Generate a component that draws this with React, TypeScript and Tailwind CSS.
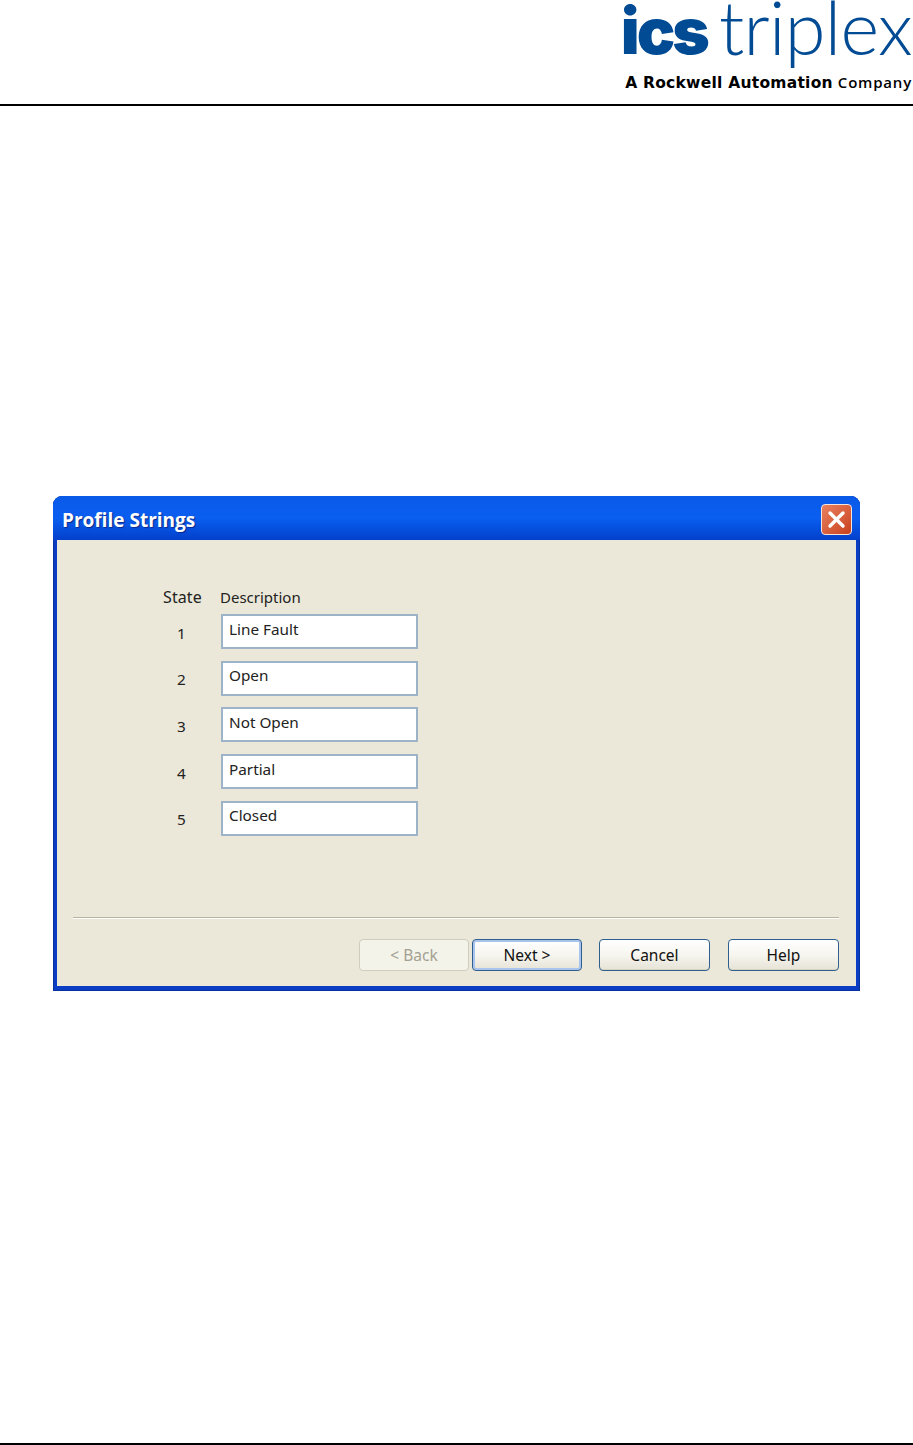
const rows = [
  { state: '1', text: 'Line Fault' },
  { state: '2', text: 'Open' },
  { state: '3', text: 'Not Open' },
  { state: '4', text: 'Partial' },
  { state: '5', text: 'Closed' },
];

const buttonBase =
  'h-[32px] rounded-[4px] border text-[15.5px] pt-[1px] flex items-center justify-center';

function ActionButton({ label, focused, wide }: { label: string; focused?: boolean; wide?: boolean }) {
  return (
    <div
      className={`${buttonBase} ${wide ? 'w-[111px]' : 'w-[110px]'} border-[#2f5f8f] bg-gradient-to-b from-white via-[#f6f5ef] to-[#e6e3d6] text-[#111] ${
        focused ? 'shadow-[inset_0_0_0_2px_#a9c4ec]' : 'shadow-[inset_0_-1px_0_#d8d4c2]'
      }`}
    >
      {label}
    </div>
  );
}

export default function App() {
  return (
    <div className="w-[913px] h-[1445px] bg-white flex flex-col font-['Noto_Sans',sans-serif] overflow-hidden">
      {/* Logo header */}
      <header className="h-[106px] shrink-0 border-b-2 border-black flex flex-col items-end pr-[1px]">
        <div className="h-[75px] flex items-start text-[#004b93]">
          <span className="font-['Inter',sans-serif] font-black text-[64px] leading-[62px] tracking-[-3px] mr-[12px]">ics</span>
          <span className="font-['Lato',sans-serif] font-light text-[74px] leading-[53px] tracking-[-0.7px]">triplex</span>
        </div>
        <div className="flex items-baseline gap-[5px] text-black leading-none font-['DejaVu_Sans',sans-serif]">
          <span className="font-bold text-[15.5px] tracking-[0.25px]">A Rockwell Automation</span>
          <span className="font-['Open_Sans',sans-serif] font-semibold text-[15px] tracking-[0.8px]">Company</span>
        </div>
      </header>

      {/* Dialog */}
      <div className="mt-[390px] ml-[53px] w-[807px] h-[495px] rounded-t-[9px] bg-[#0a3cc4] shadow-[inset_0_0_0_1px_#0831a0] flex flex-col">
        <div className="h-[44px] shrink-0 rounded-t-[9px] bg-gradient-to-b from-[#0a5ae8] via-[#0a5ef0] to-[#0440cc] flex items-center justify-between pl-[9px] pr-[8px]">
          <span className="font-['Open_Sans',sans-serif] font-bold text-[19px] pt-[4px] text-white [text-shadow:1px_1px_1px_#0b2a8c]">
            Profile Strings
          </span>
          <div className="w-[31px] h-[31px] mt-[2px] rounded-[4px] border border-[#f3e4de] bg-gradient-to-br from-[#e8805f] to-[#c9401a] flex items-center justify-center">
            <svg width="21" height="21" viewBox="0 0 21 21">
              <path d="M4 4 L17 17 M17 4 L4 17" stroke="white" strokeWidth="3.4" strokeLinecap="round" />
            </svg>
          </div>
        </div>

        <div className="flex-1 mx-[4px] mb-[5px] bg-[#ebe8d9] flex flex-col">
          <div className="h-[377px] shrink-0 pt-[46px] pl-[106px]">
            <div className="flex text-[#222] leading-[20px]">
              <span className="w-[57px] text-[16px] tracking-[0.1px] mt-[1px]">State</span>
              <span className="mt-[1px] text-[15px]">Description</span>
            </div>
            <div className="mt-[7px] flex flex-col gap-[11.7px]">
              {rows.map((row) => (
                <div key={row.state} className="flex items-center h-[35px]">
                  <span className="w-[58px] pl-[14px] pt-[3px] text-[15.3px] text-[#222]">{row.state}</span>
                  <div className="w-[197px] h-[35px] bg-white border-2 border-[#9db4c8] pl-[6px] pb-[5px] flex items-center text-[15.3px] text-[#222]">
                    {row.text}
                  </div>
                </div>
              ))}
            </div>
          </div>

          <div className="mx-[16px] w-[766px] h-[2px] bg-[#b8b4a0] border-b border-white" />

          <div className="mt-[20px] mr-[17px] flex justify-end">
            <div className={`${buttonBase} w-[110px] border-[#cfcdbd] bg-[#f4f3ea] text-[#a3a192] mr-[3px]`}>&lt; Back</div>
            <div className="mr-[17px]">
              <ActionButton label="Next >" focused />
            </div>
            <div className="mr-[18px]">
              <ActionButton label="Cancel" wide />
            </div>
            <ActionButton label="Help" wide />
          </div>
        </div>
      </div>

      {/* Footer rule */}
      <div className="mt-auto h-[2px] bg-black" />
    </div>
  );
}
